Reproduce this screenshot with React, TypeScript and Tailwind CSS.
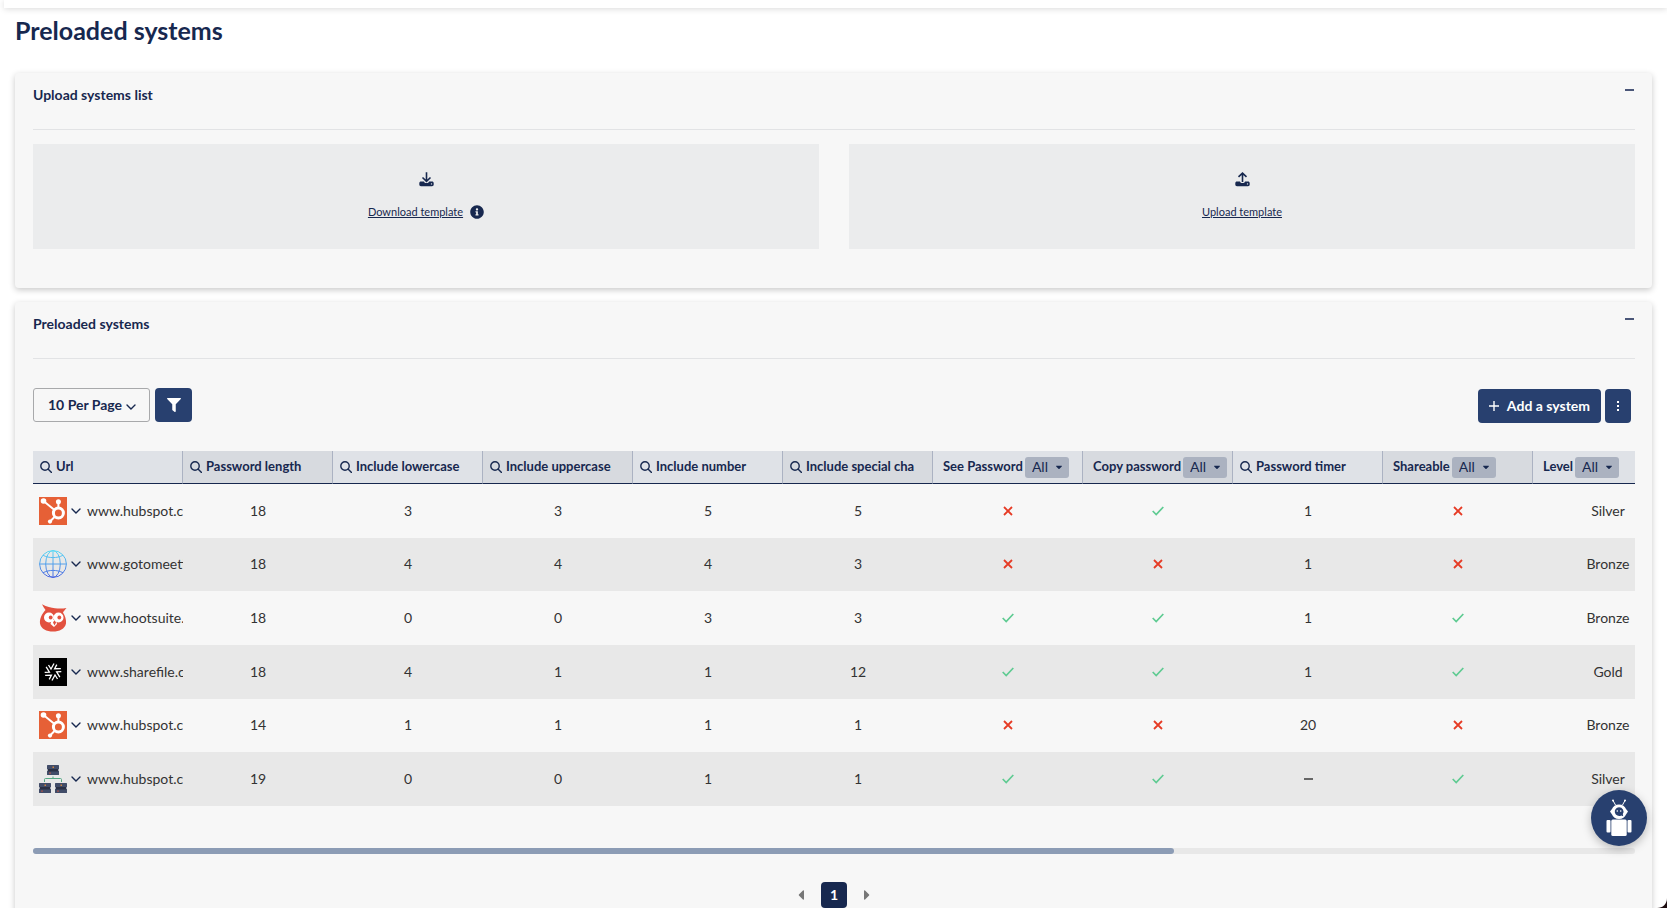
import type { ReactNode } from "react"
import { FaCaretDown, FaCaretLeft, FaCaretRight, FaFilter, FaInfoCircle } from "react-icons/fa"

type Logo = "hubspot" | "globe" | "owl" | "sharefile" | "servers"

const columns = [
  { title: "Url", search: true },
  { title: "Password length", search: true },
  { title: "Include lowercase", search: true },
  { title: "Include uppercase", search: true },
  { title: "Include number", search: true },
  { title: "Include special cha", search: true },
  { title: "See Password", search: false },
  { title: "Copy password", search: false },
  { title: "Password timer", search: true },
  { title: "Shareable", search: false },
  { title: "Level", search: false },
]

const systems: { logo: Logo; url: string; values: (string | boolean)[] }[] = [
  { logo: "hubspot", url: "www.hubspot.co", values: ["18", "3", "3", "5", "5", false, true, "1", false, "Silver"] },
  { logo: "globe", url: "www.gotomeeti", values: ["18", "4", "4", "4", "3", false, false, "1", false, "Bronze"] },
  { logo: "owl", url: "www.hootsuite.", values: ["18", "0", "0", "3", "3", true, true, "1", true, "Bronze"] },
  { logo: "sharefile", url: "www.sharefile.c", values: ["18", "4", "1", "1", "12", true, true, "1", true, "Gold"] },
  { logo: "hubspot", url: "www.hubspot.co", values: ["14", "1", "1", "1", "1", false, false, "20", false, "Bronze"] },
  { logo: "servers", url: "www.hubspot.co", values: ["19", "0", "0", "1", "1", true, true, "–", true, "Silver"] },
]

function HubspotLogo() {
  return (
    <svg viewBox="0 0 28 28" className="size-7 shrink-0">
      <rect width="28" height="28" fill="#e66036" />
      <g stroke="#fff" fill="none">
        <circle cx="19.4" cy="16" r="5" strokeWidth="3" />
        <path d="M19.4 4.5v7M4.5 4l11 9M15.5 20l-4.5 4.5" strokeWidth="2" />
      </g>
      <g fill="#fff">
        <circle cx="4.5" cy="4" r="2.8" />
        <circle cx="19.4" cy="4.7" r="2.5" />
        <circle cx="11" cy="24.6" r="2.1" />
      </g>
    </svg>
  )
}

function GlobeLogo() {
  return (
    <svg viewBox="0 0 28 28" className="size-7 shrink-0" fill="none" stroke="url(#globe)">
      <defs>
        <linearGradient id="globe" gradientUnits="userSpaceOnUse" x1="0" y1="0" x2="0" y2="28">
          <stop stopColor="#5bdcf5" />
          <stop offset="1" stopColor="#4a63e0" />
        </linearGradient>
      </defs>
      <circle cx="14" cy="14" r="13.4" />
      <ellipse cx="14" cy="14" rx="7.3" ry="13.4" />
      <path d="M14 .5v27M.5 14h27M4 5.2c5.5 3.2 14.5 3.2 20 0M4 22.8c5.5-3.2 14.5-3.2 20 0" />
    </svg>
  )
}

function OwlLogo() {
  return (
    <svg viewBox="0 0 28 28" className="size-7 shrink-0">
      <path
        d="M3 .3C8 2.800 12 4 16 4.300c4 .3 8 .3 11.500-.3-1.500 2-2.800 3.200-3.500 4.400 2 3.300 3.500 7.300 3 11.100C25.800 25 20.500 27.500 14 27.500S2 25 1 19.500C.5 15 2.800 10 6.500 6 5.200 4.300 4 2.200 3 .3z"
        fill="#e2513f"
      />
      <circle cx="10" cy="13.5" r="5" fill="#fff" />
      <circle cx="19.5" cy="13.5" r="5" fill="#fff" />
      <path d="M12.500 16h4.500l1 4-3 3-3.500-3z" fill="#fff" />
      <circle cx="11.7" cy="13.5" r="1.9" fill="#e2513f" />
      <circle cx="20.3" cy="13.5" r="1.9" fill="#e2513f" />
      <path d="M15.500 16.200l1.600 2.300-1.600 2.900-1.500-2.900z" fill="#e2513f" />
    </svg>
  )
}

function SharefileLogo() {
  return (
    <svg viewBox="0 0 28 28" className="size-7 shrink-0">
      <rect width="28" height="28" fill="#000" />
      <g stroke="#fff" strokeWidth="1.3" fill="none">
        {[0, 60, 120, 180, 240, 300].map((angle) => (
          <path key={angle} d="M15 5.500l-3 5.500-2.500-4" transform={`rotate(${angle} 14 14)`} />
        ))}
      </g>
    </svg>
  )
}

function ServersLogo() {
  return (
    <svg viewBox="0 0 28 28" className="size-7 shrink-0">
      <path d="M5.500 17v-2.500q0-1 1-1h15q1 0 1 1V17M14 13.500v-2" stroke="#55a884" fill="none" />
      {[[8, 0], [0, 18], [16, 18]].map(([x, y]) => (
        <g key={x} transform={`translate(${x} ${y})`}>
          <rect width="12" height="4.5" rx=".5" fill="#414c68" />
          <rect y="5.5" width="12" height="4.5" rx=".5" fill="#414c68" />
          <rect x="1" y="4" width="10" height="2.5" fill="#2a3045" />
          <rect x="5.5" y="1.5" width="1.5" height="1.5" fill="#d4843c" />
          <rect x="2" y="7.5" width="2" height="1.2" fill="#a9534a" />
        </g>
      ))}
    </svg>
  )
}

const logos: Record<Logo, ReactNode> = {
  hubspot: <HubspotLogo />,
  globe: <GlobeLogo />,
  owl: <OwlLogo />,
  sharefile: <SharefileLogo />,
  servers: <ServersLogo />,
}

function SearchIcon() {
  return (
    <svg viewBox="0 0 12 12" className="size-3 shrink-0" fill="none" stroke="currentColor" strokeWidth="1.4">
      <circle cx="5" cy="5" r="4.2" />
      <path d="M8 8l3.500 3.500" strokeLinecap="round" />
    </svg>
  )
}

function ChevronIcon() {
  return (
    <svg viewBox="0 0 10 10" className="size-[10px]" fill="none" stroke="currentColor" strokeWidth="1.4">
      <path d="M1 3l4 4 4-4" strokeLinecap="round" />
    </svg>
  )
}

function TrayIcon({ up = false }: { up?: boolean }) {
  return (
    <svg viewBox="0 0 15 15" className="size-[15px]">
      <path
        d="M2 9.500h3c.3 1 1.200 1.600 2.500 1.600S9.700 10.500 10 9.500h3c1 0 1.700.7 1.700 1.700v1.300c0 1-.7 1.700-1.700 1.700H2c-1 0-1.700-.7-1.700-1.700v-1.300C.3 10.200 1 9.500 2 9.500z"
        fill="currentColor"
      />
      <path
        d={up ? "M7.500 10V1.500M3.500 4.800l4-3.700 4 3.700" : "M7.500 .2V9M3.500 5.500l4 3.800 4-3.800"}
        stroke="currentColor"
        strokeWidth="1.6"
        fill="none"
      />
      <circle cx="12.5" cy="11.9" r=".7" fill="#ebeced" />
    </svg>
  )
}

function RobotIcon() {
  return (
    <svg viewBox="0 0 26 38" className="h-[38px] w-[26px]" fill="#fff">
      <path d="M7 1.500L9.500 6M19 1.500L16.500 6" stroke="#fff" />
      <circle cx="7" cy="1.5" r="1" />
      <circle cx="19" cy="1.5" r="1" />
      <path d="M13 5.500c3.500 0 6 2 7 4.500l2 2.500-2 3c-1 2.500-3.500 4.500-7 4.500s-6-2-7-4.500l-2-3 2-2.500c1-2.500 3.500-4.500 7-4.500z" />
      <path d="M13 8.200a4.400 4.400 0 1 0 2.200 8.300l2 .8-.4-2.300a4.400 4.400 0 0 0-3.800-6.800z" fill="#28406f" />
      <circle cx="11.3" cy="12" r=".8" />
      <circle cx="14.7" cy="12" r=".8" />
      <rect x="5.3" y="20.5" width="15.4" height="16.5" rx="1.5" />
      <rect x=".5" y="21" width="4" height="12.5" rx="1" />
      <rect x="21.5" y="21" width="4" height="12.5" rx="1" />
    </svg>
  )
}

function Card({ title, children }: { title: string; children: ReactNode }) {
  return (
    <section className="rounded-[4px] bg-[#f7f7f7] pr-[17px] pl-[18px] shadow-[0_2px_6px_rgba(0,0,0,0.22)]">
      <div className="flex h-[57px] items-start justify-between border-b border-[#e2e3e5] pt-3">
        <h2 className="text-sm leading-5 font-bold">{title}</h2>
        <button type="button" aria-label={`Collapse ${title}`} className="pt-1 pr-px">
          <span className="block h-0.5 w-[9px] bg-[#4a5678]" />
        </button>
      </div>
      {children}
    </section>
  )
}

function HeaderCell({ title, search }: { title: string; search: boolean }) {
  return (
    <th
      scope="col"
      className="h-[33px] overflow-hidden border-r border-b border-r-[#abb2c2] border-b-[#17284f] bg-[#dfe2e7] p-0 text-[13px] font-bold even:bg-[#d7dadf]"
    >
      {search ? (
        <div className="flex items-center gap-1 pl-[7px] whitespace-nowrap">
          <SearchIcon />
          {title}
        </div>
      ) : (
        <label className="flex items-center gap-0.5 pl-[10px] whitespace-nowrap">
          {title}
          <span className="relative">
            <select className="block h-[21px] w-11 appearance-none rounded-[3px] bg-[#abb2c0] pl-[7px] text-sm leading-5 font-normal">
              <option>All</option>
            </select>
            <FaCaretDown className="pointer-events-none absolute top-[5px] right-[5px] size-[10px]" />
          </span>
        </label>
      )}
    </th>
  )
}

function Value({ value }: { value: string | boolean }) {
  if (value === true) {
    return (
      <svg viewBox="0 0 12 10" role="img" aria-label="Yes" className="mx-auto h-[10px] w-3" fill="none">
        <path d="M.7 5l3.500 3.500L11.300 1" stroke="#5fcb92" strokeWidth="1.7" />
      </svg>
    )
  }
  if (value === false) {
    return (
      <svg viewBox="0 0 10 10" role="img" aria-label="No" className="mx-auto size-[10px]" fill="none">
        <path d="M1 1l8 8M9 1L1 9" stroke="#e63b25" strokeWidth="1.8" />
      </svg>
    )
  }
  if (value === "–") {
    return <span role="img" aria-label="None" className="mx-auto block h-0.5 w-[9px] bg-[#666]" />
  }
  return <>{value}</>
}

export default function App() {
  return (
    <div className="relative h-screen overflow-x-hidden overflow-y-auto bg-white font-[Lato,sans-serif] text-[#17284f] [scrollbar-width:none]">
      <header className="ml-1 h-2 bg-white shadow-[0_1px_6px_rgba(0,0,0,0.15)]" />

      <main className="px-[15px]">
        <h1 className="pt-[7px] pb-7 text-[25px] leading-[30px] font-bold">Preloaded systems</h1>

        <div className="flex flex-col gap-[14px]">
          <Card title="Upload systems list">
            <div className="grid grid-cols-2 gap-[30px] pt-[14px] pb-[39px]">
              <div className="flex h-[105px] flex-col items-center gap-[17px] bg-[#ebeced] pt-7">
                <TrayIcon />
                <div className="flex items-center gap-[7px]">
                  <a href="#download" className="text-[11px] leading-4 underline">
                    Download template
                  </a>
                  <FaInfoCircle className="size-[14px]" />
                </div>
              </div>
              <div className="flex h-[105px] flex-col items-center gap-[17px] bg-[#ebeced] pt-7">
                <TrayIcon up />
                <a href="#upload" className="text-[11px] leading-4 underline">
                  Upload template
                </a>
              </div>
            </div>
          </Card>

          <Card title="Preloaded systems">
            <div className="flex items-start justify-between pt-[29px] pr-1 pb-7">
              <div className="flex gap-[5px]">
                <div className="relative">
                  <select
                    aria-label="Rows per page"
                    className="block h-[34px] w-[117px] appearance-none rounded-[3px] border border-[#a8a9ab] bg-transparent pl-[14px] text-sm font-bold"
                  >
                    <option>10 Per Page</option>
                  </select>
                  <span className="pointer-events-none absolute top-[14px] right-[14px]">
                    <ChevronIcon />
                  </span>
                </div>
                <button
                  type="button"
                  aria-label="Filter"
                  className="flex h-[34px] w-[37px] items-center justify-center rounded-[4px] bg-[#28406f] text-white"
                >
                  <FaFilter className="size-[14px]" />
                </button>
              </div>
              <div className="flex gap-1 pt-px text-white">
                <button
                  type="button"
                  className="flex h-[34px] items-center gap-2 rounded-[4px] bg-[#28406f] px-[11px] text-sm font-bold"
                >
                  <svg viewBox="0 0 10 10" className="size-[10px]" stroke="currentColor" strokeWidth="1.4">
                    <path d="M5 0v10M0 5h10" />
                  </svg>
                  Add a system
                </button>
                <button
                  type="button"
                  aria-label="More actions"
                  className="flex h-[34px] w-[26px] flex-col items-center justify-center gap-0.5 rounded-[4px] bg-[#28406f]"
                >
                  <span className="size-0.5 bg-white" />
                  <span className="size-0.5 bg-white" />
                  <span className="size-0.5 bg-white" />
                </button>
              </div>
            </div>

            <div className="overflow-x-auto [scrollbar-width:none]">
              <table className="h-[355px] w-[1650px] table-fixed border-separate border-spacing-0">
                <thead>
                  <tr className="text-left">
                    {columns.map((column) => (
                      <HeaderCell key={column.title} {...column} />
                    ))}
                  </tr>
                </thead>
                <tbody className="text-sm text-[#333]">
                  {systems.map((system, index) => (
                    <tr key={index} className="even:bg-[#e8e8e8]">
                      <td className="overflow-hidden p-0">
                        <div className="flex items-center pl-1.5 whitespace-nowrap">
                          {logos[system.logo]}
                          <button type="button" aria-label="Expand" className="mx-1 text-[#17284f]">
                            <ChevronIcon />
                          </button>
                          <span className="pl-0.5">{system.url}</span>
                        </div>
                      </td>
                      {system.values.map((value, i) => (
                        <td key={i} className="p-0 text-center">
                          <Value value={value} />
                        </td>
                      ))}
                    </tr>
                  ))}
                </tbody>
              </table>
            </div>

            <div className="mt-[42px] h-1.5 rounded-full bg-[#e8e8e8]">
              <div className="h-1.5 w-[71.2%] rounded-full bg-[#8c9cb5]" />
            </div>

            <nav aria-label="Pagination" className="flex items-center justify-center gap-[14px] pt-7 pb-6">
              <button type="button" aria-label="Previous page" className="flex w-3 justify-center text-[#777]">
                <FaCaretLeft className="size-4" />
              </button>
              <button
                type="button"
                aria-current="page"
                className="size-[26px] rounded-[4px] bg-[#17284f] text-sm leading-[26px] font-bold text-white"
              >
                1
              </button>
              <button type="button" aria-label="Next page" className="flex w-3 justify-center text-[#777]">
                <FaCaretRight className="size-4" />
              </button>
            </nav>
          </Card>
        </div>
      </main>

      <button
        type="button"
        aria-label="Open assistant"
        className="fixed right-5 bottom-[62px] flex size-14 items-center justify-center rounded-full bg-[#28406f] shadow-[0_3px_10px_rgba(0,0,0,0.25)]"
      >
        <RobotIcon />
      </button>
      <svg viewBox="0 0 10 10" className="pointer-events-none fixed right-0 bottom-0 size-[10px]">
        <path d="M10 0v10H0C6 10 10 6 10 0z" fill="#1d0d10" />
      </svg>
    </div>
  )
}
